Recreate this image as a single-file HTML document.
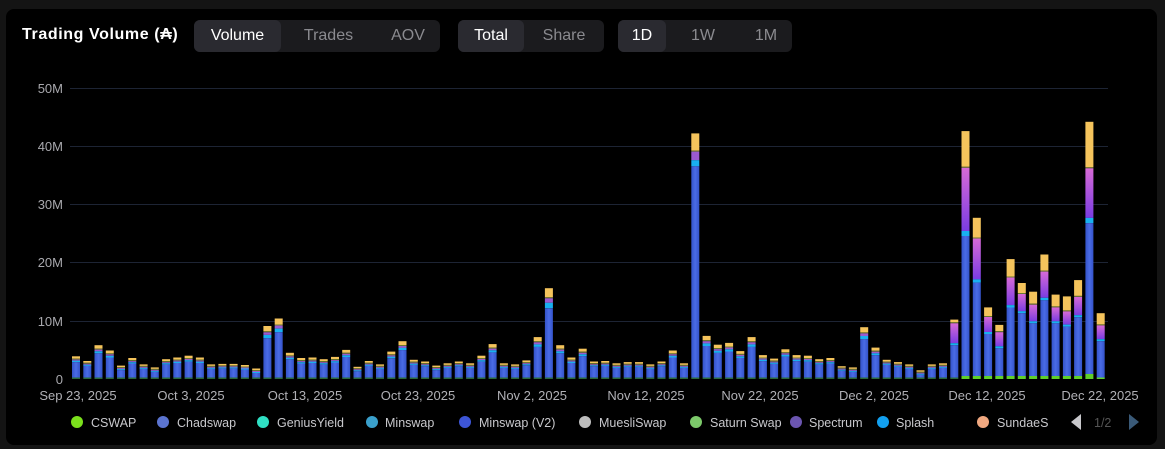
<!DOCTYPE html>
<html><head><meta charset="utf-8">
<style>
body{margin:0;width:1165px;height:449px;background:#141414;overflow:hidden;font-family:"Liberation Sans",sans-serif}
.card{position:absolute;left:6px;top:9px;width:1151px;height:436px;background:#000;border-radius:8px}
.title{position:absolute;left:22px;top:26px;color:#fff;font-weight:bold;font-size:16px;letter-spacing:0.6px}
.grp{position:absolute;top:20px;height:32px;background:#1b1b1e;border-radius:6px;display:flex}
.grp div{height:32px;line-height:32px;font-size:16px;color:#8a8a8f;text-align:center}
.grp .a{background:#2a2a30;color:#fff;border-radius:6px}
svg{position:absolute;left:0;top:0}
</style></head><body>
<div class="card"></div>
<div class="title">Trading Volume (₳)</div>
<div class="grp" style="left:194px;width:246px"><div class="a" style="width:87px">Volume</div><div style="width:95px">Trades</div><div style="width:64px">AOV</div></div>
<div class="grp" style="left:458px;width:146px"><div class="a" style="width:66px">Total</div><div style="width:80px">Share</div></div>
<div class="grp" style="left:618px;width:174px"><div class="a" style="width:48px">1D</div><div style="width:74px">1W</div><div style="width:52px">1M</div></div>
<svg width="1165" height="449" id="s">
<defs><linearGradient id="pg" x1="0" y1="0" x2="0" y2="1"><stop offset="0" stop-color="#d76ad6"/><stop offset="1" stop-color="#7a3ce2"/></linearGradient>
<linearGradient id="bg" x1="0" y1="0" x2="1" y2="0"><stop offset="0" stop-color="#3453c9"/><stop offset="0.5" stop-color="#4a6ce6"/><stop offset="1" stop-color="#3453c9"/></linearGradient></defs>
<g stroke="#1d2434" stroke-width="1">
<line x1="70" x2="1108" y1="88.5" y2="88.5"/><line x1="70" x2="1108" y1="146.5" y2="146.5"/><line x1="70" x2="1108" y1="204.5" y2="204.5"/><line x1="70" x2="1108" y1="262.5" y2="262.5"/><line x1="70" x2="1108" y1="321.5" y2="321.5"/></g>
<g fill="#a8a8ad" font-size="13" text-anchor="end">
<text x="63" y="93">50M</text><text x="63" y="151">40M</text><text x="63" y="209">30M</text><text x="63" y="267">20M</text><text x="63" y="326">10M</text><text x="63" y="384">0</text></g>
<g id="bars"></g>
<g fill="#b0b0b5" font-size="13" text-anchor="middle">
<text x="78" y="400">Sep 23, 2025</text><text x="191" y="400">Oct 3, 2025</text><text x="305" y="400">Oct 13, 2025</text><text x="418" y="400">Oct 23, 2025</text><text x="532" y="400">Nov 2, 2025</text><text x="646" y="400">Nov 12, 2025</text><text x="760" y="400">Nov 22, 2025</text><text x="874" y="400">Dec 2, 2025</text><text x="987" y="400">Dec 12, 2025</text><text x="1100" y="400">Dec 22, 2025</text></g>
<g font-size="12.5" fill="#c8c8cc">
<circle cx="77" cy="422" r="6" fill="#7be01c"/><text x="91" y="427">CSWAP</text>
<circle cx="163" cy="422" r="6" fill="#5b74d0"/><text x="177" y="427">Chadswap</text>
<circle cx="263" cy="422" r="6" fill="#2fe0c4"/><text x="277" y="427">GeniusYield</text>
<circle cx="372" cy="422" r="6" fill="#3aa0cc"/><text x="385" y="427">Minswap</text>
<circle cx="465" cy="422" r="6" fill="#3d55d6"/><text x="479" y="427">Minswap (V2)</text>
<circle cx="585" cy="422" r="6" fill="#bdbdbd"/><text x="599" y="427">MuesliSwap</text>
<circle cx="696" cy="422" r="6" fill="#7cc96a"/><text x="710" y="427">Saturn Swap</text>
<circle cx="796" cy="422" r="6" fill="#6b55b0"/><text x="809" y="427">Spectrum</text>
<circle cx="883" cy="422" r="6" fill="#12a0f0"/><text x="896" y="427">Splash</text>
<circle cx="983" cy="422" r="6" fill="#f0a880"/><text x="997" y="427">SundaeS</text>
<polygon points="1081,414 1081,430 1071,422" fill="#c8c8cc"/>
<text x="1094" y="427" fill="#555">1/2</text>
<polygon points="1129,414 1129,430 1139,422" fill="#3a5a78"/>
</g>
</svg>
<script>
var T=[3.9,3.1,5.8,4.9,2.3,3.6,2.5,2.0,3.4,3.7,4.0,3.7,2.5,2.6,2.6,2.4,1.8,9.1,10.4,4.5,3.6,3.7,3.4,3.8,5.0,2.1,3.1,2.5,4.7,6.5,3.3,3.0,2.3,2.7,3.0,2.7,4.0,6.0,2.7,2.5,3.2,7.2,15.6,5.8,3.7,5.2,3.0,
3.1,2.7,2.9,2.9,2.5,3.0,4.9,2.7,42.2,7.4,5.9,6.2,4.8,7.2,4.1,3.5,5.1,4.1,4.0,3.4,3.6,2.2,2.0,8.9,5.4,3.3,2.9,2.5,1.5,2.5,2.7,10.2,42.6,27.7,12.3,9.3,20.6,16.5,15,21.4,14.5,14.2,17,44.2,11.3];
var B={78:[0.045,0.335],79:[0.144,0.255],80:[0.122,0.254],81:[0.12,0.21],82:[0.117,0.26],83:[0.145,0.23],84:[0.104,0.18],85:[0.138,0.19],86:[0.13,0.21],87:[0.14,0.165],88:[0.17,0.16],89:[0.16,0.185],90:[0.177,0.193],91:[0.17,0.21]};
var k=5.82,base=379,h='';
function r(x,y,hh,f){if(hh>0)h+='<rect x="'+x+'" y="'+y.toFixed(1)+'" width="8" height="'+hh.toFixed(1)+'" fill="'+f+'"/>';}
for(var i=0;i<T.length;i++){
 var x=(72+i*11.26).toFixed(1),t=T[i]*k,y=base-t,ye,pu,cy;
 if(B[i]){ye=B[i][0]*t;pu=B[i][1]*t;cy=Math.max(2,t*0.02);}
 else if(i==55){ye=t*0.07;pu=t*0.035;cy=t*0.025;}
 else{ye=Math.max(1.5,t*0.1);pu=Math.max(1,t*0.05);cy=Math.max(1,t*0.06);}
 r(x,y,ye,'#f5c45c');y+=ye;
 r(x,y,1,'#6a7a30');y+=1;
 r(x,y,pu,B[i]?'url(#pg)':'#9a5ad0');y+=pu;
 r(x,y,cy,'#18b0f0');y+=cy;
 var g=(i>=79&&i<=90)?3:1.5;if(i==90)g=5;
 r(x,y,base-y-g,'url(#bg)');
 r(x,base-g,g,i>=79?'#5fd02a':'#2a6a3a');
}
document.getElementById('bars').innerHTML=h;
</script>
</body></html>
